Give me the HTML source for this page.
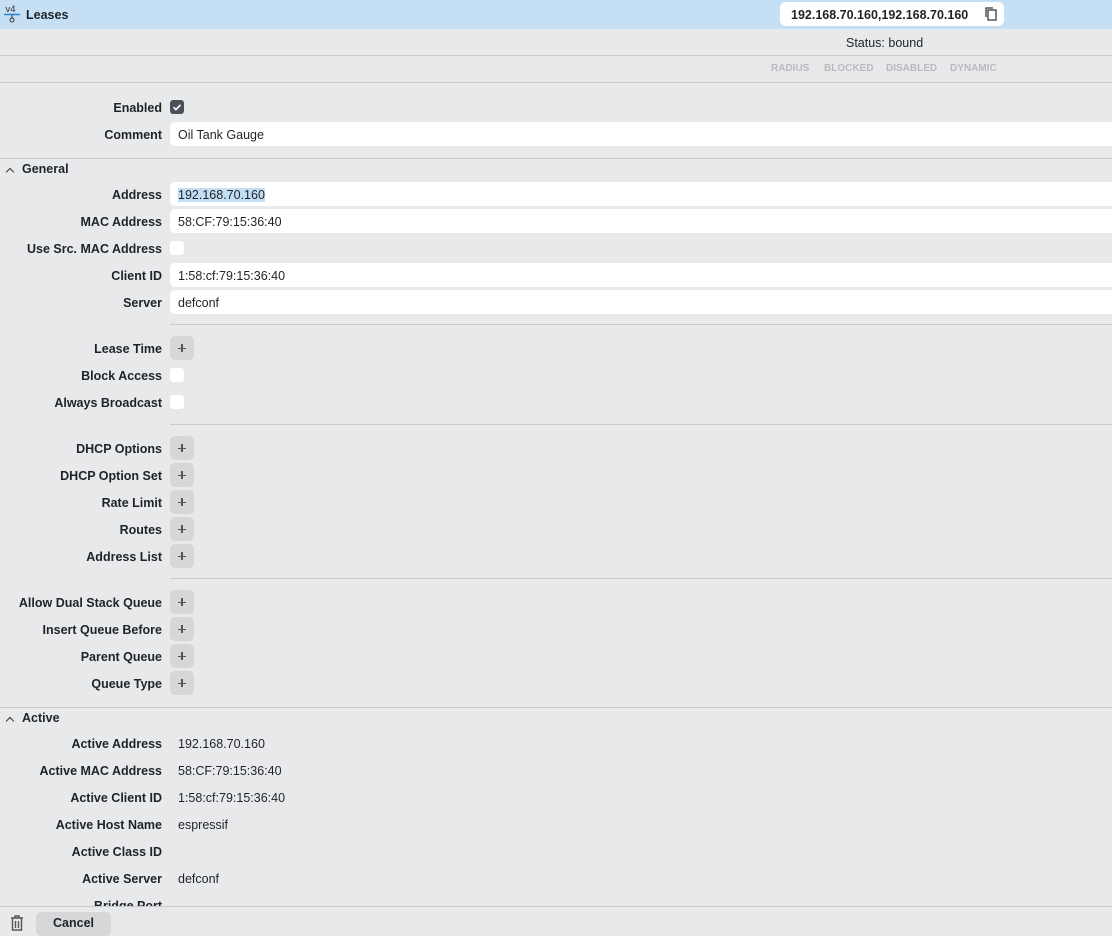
<!DOCTYPE html><html><head><style>
body{margin:0;width:1112px;height:933px;background:#e8e9ea;font-family:"Liberation Sans",sans-serif;font-size:12.5px;color:#1f2328;position:relative;overflow:hidden}
.a{position:absolute}
.lb{position:absolute;right:950px;font-weight:bold;white-space:nowrap;line-height:16px}
.in{position:absolute;left:170px;right:0;height:24px;background:#fff;border-radius:5px 0 0 5px}
.v{position:absolute;left:178px;line-height:16px}
.cb{position:absolute;left:170px;width:14px;height:14px;background:#fff;border-radius:3px}
.pl{position:absolute;left:170px;width:24px;height:24px;background:#d5d7d9;border-radius:5px}
.pl:before{content:"";position:absolute;left:8px;top:11.5px;width:8px;height:1.3px;background:#555}
.pl:after{content:"";position:absolute;left:11.4px;top:8px;width:1.3px;height:8px;background:#555}
.hl{position:absolute;height:1px;background:#c9cacc;right:0}
.sec{position:absolute;left:22px;font-weight:bold}
.car{position:absolute;left:7px;width:5px;height:5px;border-left:1.5px solid #333;border-top:1.5px solid #333;transform:rotate(45deg)}
.st{position:absolute;top:63px;font-size:10px;font-weight:bold;color:#b8babd}
</style></head><body>
<div class="a" style="left:0;top:0;width:1112px;height:29px;background:#c5e0f5"></div>
<svg class="a" style="left:4px;top:4px" width="16" height="20" viewBox="0 0 16 20"><text x="1.5" y="8" font-size="9.5" font-family="Liberation Sans" fill="#333">v4</text><line x1="0" y1="10.5" x2="16" y2="10.5" stroke="#2a7fd0" stroke-width="1.5"/><line x1="8" y1="11" x2="8" y2="14" stroke="#333"/><circle cx="8" cy="16" r="2" fill="none" stroke="#333"/></svg>
<div class="a" style="left:26px;top:8px;font-weight:bold">Leases</div>
<div class="a" style="left:780px;top:2px;width:224px;height:24px;background:#fff;border-radius:6px"></div>
<div class="a" style="left:791px;top:8px;font-weight:bold">192.168.70.160,192.168.70.160</div>
<svg class="a" style="left:984px;top:6px" width="14" height="16" viewBox="0 0 14 16"><rect x="4" y="4" width="8" height="10" fill="none" stroke="#555" stroke-width="1.5"/><path d="M2 11V2h7" fill="none" stroke="#555" stroke-width="1.5"/></svg>
<div class="a" style="left:846px;top:36px">Status: bound</div>
<div class="hl" style="left:0;top:55px"></div>
<div class="st" style="left:771px">RADIUS</div>
<div class="st" style="left:824px">BLOCKED</div>
<div class="st" style="left:886px">DISABLED</div>
<div class="st" style="left:950px">DYNAMIC</div>
<div class="hl" style="left:0;top:82px"></div>

<div class="lb" style="top:100px">Enabled</div>
<div class="cb" style="top:100px;background:#4a5058"><svg width="14" height="14"><path d="M3.5 7.2l2.4 2.4 4.6-4.8" fill="none" stroke="#fff" stroke-width="1.6"/></svg></div>
<div class="lb" style="top:127px">Comment</div><div class="in" style="top:122px"></div>
<div class="v" style="top:127px">Oil Tank Gauge</div>
<div class="hl" style="left:0;top:158px"></div>
<div class="car" style="top:169px"></div><div class="sec" style="top:162px">General</div>

<div class="lb" style="top:187px">Address</div><div class="in" style="top:182px"></div><div class="v" style="top:187px"><span style="background:#c3dff5">192.168.70.160</span></div>
<div class="lb" style="top:214px">MAC Address</div><div class="in" style="top:209px"></div><div class="v" style="top:214px">58:CF:79:15:36:40</div>
<div class="lb" style="top:241px">Use Src. MAC Address</div><div class="cb" style="top:241px"></div>
<div class="lb" style="top:268px">Client ID</div><div class="in" style="top:263px"></div><div class="v" style="top:268px">1:58:cf:79:15:36:40</div>
<div class="lb" style="top:295px">Server</div><div class="in" style="top:290px"></div><div class="v" style="top:295px">defconf</div>
<div class="hl" style="left:170px;top:324px"></div>

<div class="lb" style="top:341px">Lease Time</div><div class="pl" style="top:336px"></div>
<div class="lb" style="top:368px">Block Access</div><div class="cb" style="top:368px"></div>
<div class="lb" style="top:395px">Always Broadcast</div><div class="cb" style="top:395px"></div>
<div class="hl" style="left:170px;top:424px"></div>

<div class="lb" style="top:441px">DHCP Options</div><div class="pl" style="top:436px"></div>
<div class="lb" style="top:468px">DHCP Option Set</div><div class="pl" style="top:463px"></div>
<div class="lb" style="top:495px">Rate Limit</div><div class="pl" style="top:490px"></div>
<div class="lb" style="top:522px">Routes</div><div class="pl" style="top:517px"></div>
<div class="lb" style="top:549px">Address List</div><div class="pl" style="top:544px"></div>
<div class="hl" style="left:170px;top:578px"></div>

<div class="lb" style="top:595px">Allow Dual Stack Queue</div><div class="pl" style="top:590px"></div>
<div class="lb" style="top:622px">Insert Queue Before</div><div class="pl" style="top:617px"></div>
<div class="lb" style="top:649px">Parent Queue</div><div class="pl" style="top:644px"></div>
<div class="lb" style="top:676px">Queue Type</div><div class="pl" style="top:671px"></div>
<div class="hl" style="left:0;top:707px"></div>
<div class="car" style="top:718px"></div><div class="sec" style="top:711px">Active</div>

<div class="lb" style="top:736px">Active Address</div><div class="v" style="top:736px">192.168.70.160</div>
<div class="lb" style="top:763px">Active MAC Address</div><div class="v" style="top:763px">58:CF:79:15:36:40</div>
<div class="lb" style="top:790px">Active Client ID</div><div class="v" style="top:790px">1:58:cf:79:15:36:40</div>
<div class="lb" style="top:817px">Active Host Name</div><div class="v" style="top:817px">espressif</div>
<div class="lb" style="top:844px">Active Class ID</div>
<div class="lb" style="top:871px">Active Server</div><div class="v" style="top:871px">defconf</div>
<div class="lb" style="top:898px">Bridge Port</div>
<div class="a" style="left:0;top:906px;width:1112px;height:27px;background:#e8e9ea;border-top:1px solid #c9cacc"></div>
<svg class="a" style="left:10px;top:915px" width="14" height="16" viewBox="0 0 14 16"><path d="M1 3h12M5 3V1h4v2M2.5 3v12h9V3M5.5 6v7M8.5 6v7" fill="none" stroke="#555" stroke-width="1.4"/></svg>
<div class="a" style="left:36px;top:912px;width:75px;height:24px;background:#d5d7d9;border-radius:5px;text-align:center;line-height:23px;font-weight:bold">Cancel</div>
</body></html>
